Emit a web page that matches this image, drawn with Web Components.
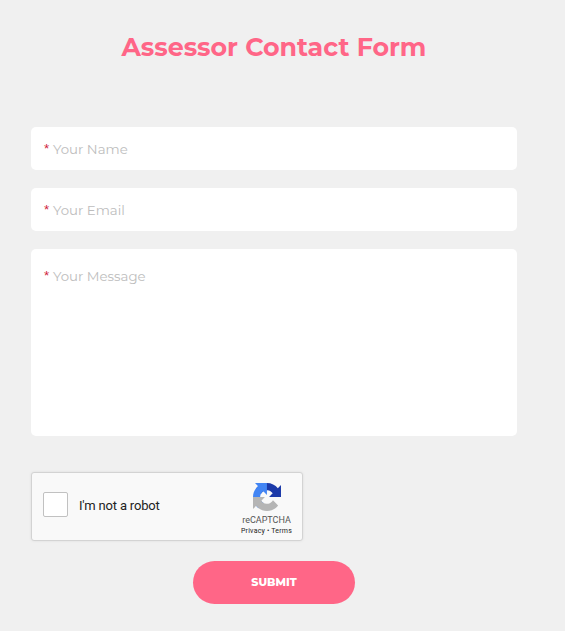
<!DOCTYPE html>
<html lang="en">
<head>
<meta charset="utf-8">
<title>Assessor Contact Form</title>
<style>
  body { margin: 0; background: #f0f0f0; font-family: Montserrat, Inter, "Open Sans", sans-serif; }
</style>
</head>
<body>
<contact-form heading="Assessor Contact Form">
  <form-field>Your Name</form-field>
  <form-field>Your Email</form-field>
  <form-field multiline>Your Message</form-field>
  <captcha-box slot="captcha"></captcha-box>
  <submit-button slot="submit">SUBMIT</submit-button>
</contact-form>

<script>
class ContactForm extends HTMLElement {
  constructor() {
    super();
    this.attachShadow({ mode: "open" });
  }

  connectedCallback() {
    this.shadowRoot.innerHTML = `
      <style>
        :host { display: block; box-sizing: border-box; width: 548px; padding: 32px 31px 0; }
        h2 {
          margin: 0 0 65px;
          color: #ff6687;
          font-size: 25.3px;
          font-weight: 700;
          line-height: 30px;
          text-align: center;
          white-space: nowrap;
        }
        .fields { display: flex; flex-direction: column; gap: 18px; }
        .captcha { display: flex; margin-top: 36px; }
        .actions { display: flex; justify-content: center; margin-top: 20px; }
      </style>
      <h2>${this.getAttribute("heading") || ""}</h2>
      <div class="fields"><slot></slot></div>
      <div class="captcha"><slot name="captcha"></slot></div>
      <div class="actions"><slot name="submit"></slot></div>
    `;
  }
}

class FormField extends HTMLElement {
  constructor() {
    super();
    this.attachShadow({ mode: "open" });
  }

  connectedCallback() {
    this.shadowRoot.innerHTML = `
      <style>
        :host {
          display: flex;
          box-sizing: border-box;
          width: 486px;
          height: 43px;
          padding: 13px 13px 0;
          gap: 4px;
          border-radius: 5px;
          background: #fff;
          font-size: 13.33px;
          line-height: 18px;
          cursor: text;
        }
        :host([multiline]) { height: 187px; padding-top: 18px; }
        .star { width: 5px; color: #d0213c; font-family: "Liberation Sans", Arial, sans-serif; }
        .label { color: #bdbdbd; }
      </style>
      <span class="star">*</span>
      <span class="label"><slot></slot></span>
    `;
  }
}

class CaptchaBox extends HTMLElement {
  constructor() {
    super();
    this.attachShadow({ mode: "open" });
  }

  connectedCallback() {
    this.shadowRoot.innerHTML = `
      <style>
        :host {
          display: flex;
          align-items: center;
          box-sizing: border-box;
          width: 272px;
          height: 69px;
          padding: 0 7px 0 11px;
          border: 1px solid #d3d3d3;
          border-radius: 3px;
          background: #f9f9f9;
          box-shadow: 0 0 3px rgba(0, 0, 0, 0.08);
          font-family: Roboto, sans-serif;
          color: #222;
        }
        .check {
          box-sizing: border-box;
          width: 25px;
          height: 25px;
          margin-bottom: 4px;
          border: 1px solid #c1c1c1;
          border-radius: 2px;
          background: #fff;
        }
        .text { flex: 1; margin: 0 0 2px 11px; font-size: 13px; letter-spacing: -0.18px; }
        .brand { display: flex; flex-direction: column; align-items: center; width: 57px; padding-top: 5px; }
        svg { width: 28px; height: 28px; }
        .name { margin-top: 4px; color: #555; font-size: 9px; line-height: 11px; }
        .links { font-size: 7px; line-height: 10px; letter-spacing: 0.2px; white-space: nowrap; }
      </style>
      <span class="check" role="checkbox" aria-checked="false"></span>
      <span class="text">I'm not a robot</span>
      <div class="brand">
        <svg viewBox="0 0 64 64" aria-hidden="true">
          <path fill="#1c3aa9" d="M64 31.955l-.033-1.37V4.687l-7.16 7.16C50.948 4.674 42.033.093 32.05.093c-10.389 0-19.622 4.96-25.458 12.64l11.736 11.86a15.55 15.55 0 0 1 4.754-5.334c2.05-1.6 4.952-2.906 8.968-2.906.485 0 .86.057 1.135.163 4.976.393 9.288 3.14 11.828 7.124l-8.307 8.307L64 31.953"/>
          <path fill="#4285f4" d="M31.862.094l-1.37.033H4.594l7.16 7.16C4.58 13.147 0 22.06 0 32.046c0 10.388 4.96 19.622 12.64 25.458L24.5 45.768a15.55 15.55 0 0 1-5.334-4.754c-1.6-2.05-2.906-4.952-2.906-8.968 0-.485.057-.86.163-1.135.393-4.976 3.14-9.288 7.124-11.828l8.307 8.307L31.86.095"/>
          <path fill="#b5b5b5" d="M.001 32.045l.033 1.37v25.898l7.16-7.16c5.86 7.173 14.774 11.754 24.76 11.754 10.388 0 19.622-4.96 25.458-12.64l-11.736-11.86a15.55 15.55 0 0 1-4.754 5.334c-2.05 1.6-4.952 2.906-8.968 2.906-.485 0-.86-.057-1.135-.163-4.976-.393-9.288-3.14-11.828-7.124l8.307-8.307c-10.522.04-22.4.066-27.295-.005"/>
        </svg>
        <span class="name">reCAPTCHA</span>
        <span class="links">Privacy • Terms</span>
      </div>
    `;
  }
}

class SubmitButton extends HTMLElement {
  constructor() {
    super();
    this.attachShadow({ mode: "open" });
  }

  connectedCallback() {
    this.shadowRoot.innerHTML = `
      <style>
        :host { display: block; }
        button {
          display: block;
          width: 162px;
          height: 43px;
          padding: 0;
          border: 0;
          border-radius: 22px;
          background: #ff6687;
          color: #fff;
          font: 800 11px/43px Montserrat, Inter, "Open Sans", sans-serif;
          cursor: pointer;
        }
      </style>
      <button type="button"><slot></slot></button>
    `;
  }
}

customElements.define("contact-form", ContactForm);
customElements.define("form-field", FormField);
customElements.define("captcha-box", CaptchaBox);
customElements.define("submit-button", SubmitButton);
</script>
</body>
</html>
